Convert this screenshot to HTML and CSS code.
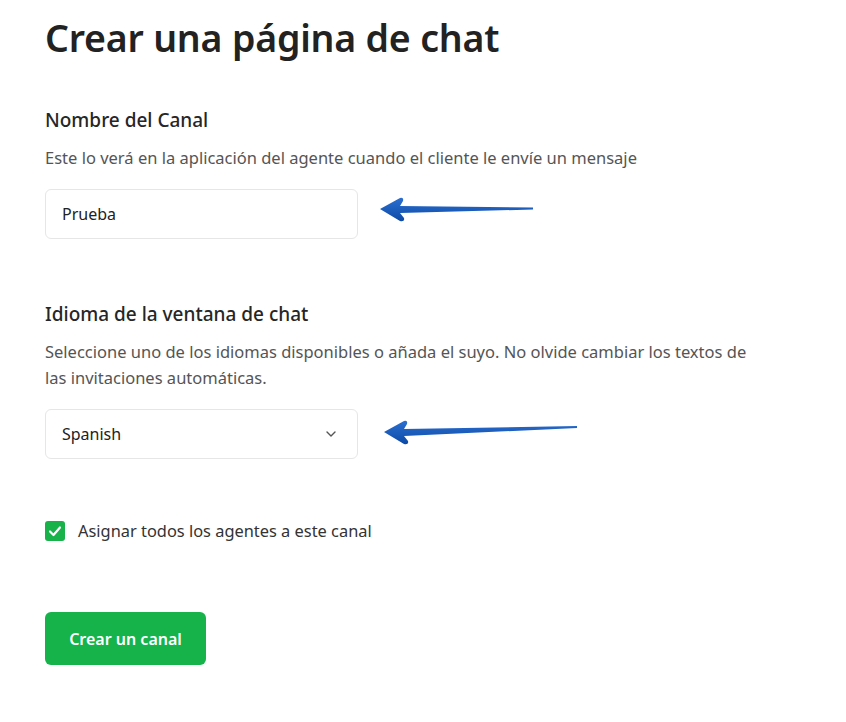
FILE: index.html
```html
<!DOCTYPE html>
<html lang="es">
<head>
<meta charset="utf-8">
<link rel="stylesheet" href="styles.css">
</head>
<body>
<main class="page">
  <h1 class="title">Crear una página de chat</h1>

  <section class="field first">
    <h2 class="label">Nombre del Canal</h2>
    <p class="hint">Este lo verá en la aplicación del agente cuando el cliente le envíe un mensaje</p>
    <div class="row">
      <div class="control">Prueba</div>
      <svg class="arrow a1" width="160" height="30" viewBox="0 0 160 30">
        <defs>
          <linearGradient id="g1" x1="0" y1="0" x2="0" y2="1">
            <stop offset="0" stop-color="#2b6fd0"/>
            <stop offset="1" stop-color="#0d4aa6"/>
          </linearGradient>
        </defs>
        <path d="M2 14 L22 3 Q26 2 25 6 L22 11 L155 12.5 L155 14.5 L22 18 L26 23 Q27 27 22 26 Z" fill="url(#g1)"/>
      </svg>
    </div>
  </section>

  <section class="field second">
    <h2 class="label">Idioma de la ventana de chat</h2>
    <p class="hint">Seleccione uno de los idiomas disponibles o añada el suyo. No olvide cambiar los textos de las invitaciones automáticas.</p>
    <div class="row">
      <div class="control select">
        <span>Spanish</span>
        <svg class="chev" width="12" height="8" viewBox="0 0 12 8"><path d="M2 2 L6 6 L10 2" fill="none" stroke="#555" stroke-width="1.4" stroke-linecap="round" stroke-linejoin="round"/></svg>
      </div>
      <svg class="arrow a2" width="200" height="30" viewBox="0 0 200 30">
        <defs>
          <linearGradient id="g2" x1="0" y1="0" x2="0" y2="1">
            <stop offset="0" stop-color="#2b6fd0"/>
            <stop offset="1" stop-color="#0d4aa6"/>
          </linearGradient>
        </defs>
        <path d="M2 16 L22 5 Q26 4 25 8 L22 13 L195 10 L195 12 L22 20 L26 25 Q27 29 22 28 Z" fill="url(#g2)"/>
      </svg>
    </div>
  </section>

  <label class="check">
    <span class="box"><svg width="20" height="20" viewBox="0 0 20 20"><path d="M5 10.5 L8.5 14 L15 6.5" fill="none" stroke="#fff" stroke-width="2.2" stroke-linecap="round" stroke-linejoin="round"/></svg></span>
    <span class="check-text">Asignar todos los agentes a este canal</span>
  </label>

  <button class="btn">Crear un canal</button>
</main>
</body>
</html>
```
FILE: styles.css
```css
* { box-sizing: border-box; }
html, body { margin: 0; background: #fff; }
body {
  font-family: "Noto Sans", "Open Sans", sans-serif;
  color: #2a2a2a;
}
.page {
  padding: 12px 0 0 45px;
  display: flex;
  flex-direction: column;
  align-items: flex-start;
}
.title {
  margin: 0;
  font-size: 37.5px;
  font-weight: 600;
  line-height: 52px;
  color: #222;
  letter-spacing: -0.2px;
}
.field { display: flex; flex-direction: column; }
.first { margin-top: 44px; }
.second { margin-top: 63px; }
.label {
  margin: 0;
  font-size: 19px;
  font-weight: 500;
  line-height: 24px;
  color: #262626;
}
.hint {
  margin: 13px 0 0;
  font-size: 16.5px;
  line-height: 26px;
  color: #555;
  max-width: 715px;
}
.row {
  margin-top: 18px;
  display: flex;
  align-items: center;
}
.control {
  width: 313px;
  height: 50px;
  border: 1px solid #e6e6e6;
  border-radius: 6px;
  padding: 0 16px;
  display: flex;
  align-items: center;
  font-size: 16px;
  color: #222;
}
.select { justify-content: space-between; }
.chev { margin-right: 4px; }
.arrow { margin-left: 20px; }
.a1 { margin-top: -8px; }
.a2 { margin-left: 24px; margin-top: -6px; }
.check {
  margin-top: 60px;
  display: flex;
  align-items: center;
  gap: 13px;
  font-size: 16.4px;
  color: #333;
}
.box {
  width: 20px;
  height: 20px;
  border-radius: 3px;
  background: #19b14a;
  display: flex;
}
.btn {
  margin-top: 70px;
  width: 161px;
  height: 53px;
  border: 0;
  border-radius: 6px;
  background: #15b34a;
  color: #fff;
  font-family: inherit;
  font-size: 16px;
  font-weight: 600;
}
```
